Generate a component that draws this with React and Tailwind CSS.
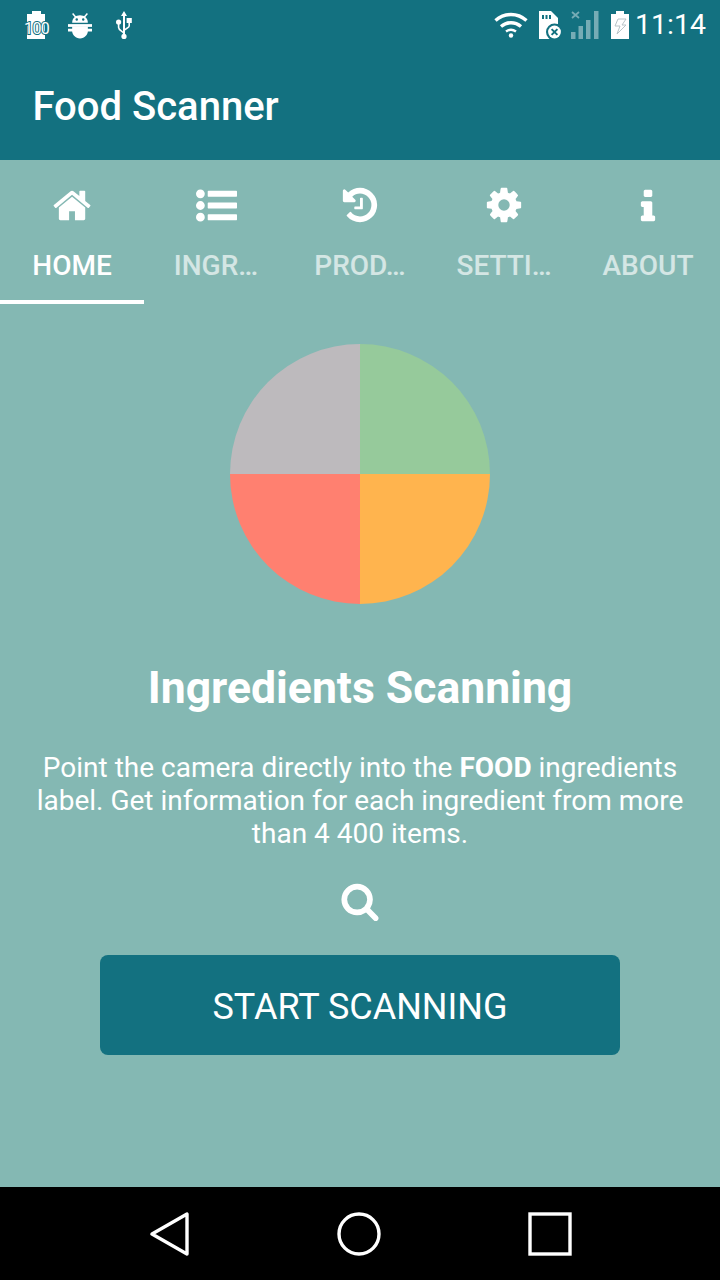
import React from "react";

const font = { fontFamily: "Roboto, sans-serif" };

// Font Awesome 4 glyph outlines on a 1792 unit grid.
const GLYPHS = {
  home: "M1408 992v480q0 26-19 45t-45 19h-384v-384h-256v384h-384q-26 0-45-19t-19-45v-480q0-1 .5-3t.5-3l575-474 575 474q1 2 1 6zm223-69l-62 74q-8 9-21 11h-3q-13 0-21-7l-692-577-692 577q-12 8-24 7-13-2-21-11l-62-74q-8-10-7-23.5t11-21.5l719-599q32-26 76-26t76 26l244 204v-195q0-14 9-23t23-9h192q14 0 23 9t9 23v408l219 182q10 8 11 21.5t-7 23.5z",
  list: "M384 1408q0 80-56 136t-136 56-136-56-56-136 56-136 136-56 136 56 56 136zm0-512q0 80-56 136t-136 56-136-56-56-136 56-136 136-56 136 56 56 136zm1408 416v192q0 13-9.5 22.5t-22.5 9.5h-1216q-13 0-22.5-9.5t-9.5-22.5v-192q0-13 9.5-22.5t22.5-9.5h1216q13 0 22.5 9.5t9.5 22.5zm-1408-928q0 80-56 136t-136 56-136-56-56-136 56-136 136-56 136 56 56 136zm1408 416v192q0 13-9.5 22.5t-22.5 9.5h-1216q-13 0-22.5-9.5t-9.5-22.5v-192q0-13 9.5-22.5t22.5-9.5h1216q13 0 22.5 9.5t9.5 22.5zm0-512v192q0 13-9.5 22.5t-22.5 9.5h-1216q-13 0-22.5-9.5t-9.5-22.5v-192q0-13 9.5-22.5t22.5-9.5h1216q13 0 22.5 9.5t9.5 22.5z",
  history: "M1664 896q0 156-61 298t-164 245-245 164-298 61q-172 0-327-72.5t-264-204.5q-7-10-6.5-22.5t8.5-20.5l137-138q10-9 25-9 16 2 23 12 73 95 179 147t225 52q104 0 198.5-40.5t163.5-109.5 109.5-163.5 40.5-198.5-40.5-198.5-109.5-163.5-163.5-109.5-198.5-40.5q-98 0-188 35.5t-160 101.5l137 138q31 30 14 69-17 40-59 40h-448q-26 0-45-19t-19-45v-448q0-42 40-59 39-17 69 14l130 129q107-101 244.5-156.5t284.5-55.5q156 0 298 61t245 164 164 245 61 298zm-640-288v448q0 14-9 23t-23 9h-320q-14 0-23-9t-9-23v-64q0-14 9-23t23-9h224v-352q0-14 9-23t23-9h64q14 0 23 9t9 23z",
  cog: "M1152 896q0-106-75-181t-181-75-181 75-75 181 75 181 181 75 181-75 75-181zm512-109v222q0 12-8 23t-20 13l-185 28q-19 54-39 91 35 50 107 138 10 12 10 25t-9 23q-27 37-99 108t-94 71q-12 0-26-9l-138-108q-44 23-91 38-16 136-29 186-7 28-36 28h-222q-14 0-24.5-8.5t-11.5-21.5l-28-184q-49-16-90-37l-141 107q-10 9-25 9-14 0-25-11-126-114-165-168-7-10-7-23 0-12 8-23 15-21 51-66.5t54-70.5q-27-50-41-99l-183-27q-13-2-21-12.5t-8-23.5v-222q0-12 8-23t19-13l186-28q14-46 39-92-40-57-107-138-10-12-10-24 0-10 9-23 26-36 98.5-107.5t94.5-71.5q13 0 26 10l138 107q44-23 91-38 16-136 29-186 7-28 36-28h222q14 0 24.5 8.5t11.5 21.5l28 184q49 16 90 37l142-107q9-9 24-9 13 0 25 10 129 119 165 170 7 8 7 22 0 12-8 23-15 21-51 66.5t-54 70.5q26 50 41 98l183 28q13 2 21 12.5t8 23.5z",
  info: "M1216 1344v128q0 26-19 45t-45 19h-512q-26 0-45-19t-19-45v-128q0-26 19-45t45-19h64v-384h-64q-26 0-45-19t-19-45v-128q0-26 19-45t45-19h384q26 0 45 19t19 45v576h64q26 0 45 19t19 45zm-128-1152v192q0 26-19 45t-45 19h-256q-26 0-45-19t-19-45v-192q0-26 19-45t45-19h256q26 0 45 19t19 45z",
  search: "M1216 832q0-185-131.5-316.5t-316.5-131.5-316.5 131.5-131.5 316.5 131.5 316.5 316.5 131.5 316.5-131.5 131.5-316.5zm512 832q0 52-38 90t-90 38q-54 0-90-38l-343-342q-179 124-399 124-143 0-273.5-55.5t-225-150-150-225-55.5-273.5 55.5-273.5 150-225 225-150 273.5-55.5 273.5 55.5 225 150 150 225 55.5 273.5q0 220-124 399l343 343q37 37 37 90z",
};

function Glyph({ name, size, className }) {
  return (
    <svg width={size} height={size} viewBox="0 0 1792 1792" fill="#fff" className={className}>
      <path d={GLYPHS[name]} />
    </svg>
  );
}

function FilmIcon() {
  return (
    <div className="relative w-[24px] h-[30px]">
      <svg width="24" height="30" viewBox="0 0 24 30" className="block">
        <path d="M8 1h9v3h4v25H3V4h5z" fill="#fff" />
      </svg>
      <span className="absolute left-0 right-0 top-[11px] text-center text-[16px] leading-[15px] tracking-[-0.6px] text-[#fff] font-['Roboto',sans-serif] [-webkit-text-stroke:2px_#137180] [paint-order:stroke_fill]">100</span>
    </div>
  );
}

function AndroidIcon() {
  return (
    <svg width="24" height="27" viewBox="0 0 26 28" fill="#fff">
      <path d="M5 1l3.5 4M21 1l-3.5 4" stroke="#fff" strokeWidth="1.6" fill="none" />
      <path d="M4.5 11c0-5 4-8 8.5-8s8.500 3 8.500 8z" />
      <rect x="0" y="12.500" width="26" height="3" />
      <rect x="0" y="17.500" width="26" height="3" />
      <rect x="4.500" y="15" width="17" height="3" />
      <path d="M4.500 20h17c0 4-3.500 8-8.500 8s-8.500-4-8.500-8z" />
      <circle cx="9.500" cy="7.500" r="1.300" fill="#137180" />
      <circle cx="16.500" cy="7.500" r="1.300" fill="#137180" />
    </svg>
  );
}

function UsbIcon() {
  return (
    <svg width="16" height="28" viewBox="0 0 16 28" fill="#fff">
      <path d="M8 0l3 5H9v19H7V5H5z" />
      <circle cx="8" cy="25.4" r="2.6" />
      <circle cx="2.6" cy="11" r="2.6" />
      <rect x="10.6" y="7" width="5.2" height="5" />
      <path d="M2.6 13v3.5c0 3 5.4 4 5.4 6.5M13.2 12v3c0 2-5.2 3-5.2 5" fill="none" stroke="#fff" strokeWidth="1.6" />
    </svg>
  );
}

function WifiIcon() {
  return (
    <svg width="34" height="26" viewBox="0 0 34 26" fill="none" stroke="#fff" strokeWidth="3.4">
      <path d="M1.5 8.5c9-8 22-8 31 0" />
      <path d="M7 14.5c6-5 14-5 20 0" />
      <path d="M12 19.5c3-2.2 7-2.2 10 0" strokeWidth="2.4" />
      <circle cx="17" cy="23.5" r="2.2" fill="#fff" stroke="none" />
    </svg>
  );
}

function SdIcon() {
  return (
    <svg width="24" height="28" viewBox="0 0 24 28">
      <path d="M0 0h12l7 7v21H0z" fill="#fff" />
      <path d="M3 4h2v4H3zM6.5 4h2v4h-2zM10 4h2v4h-2z" fill="#137180" />
      <circle cx="15.5" cy="21" r="8.5" fill="#137180" />
      <circle cx="15.5" cy="21" r="6.4" fill="#fff" />
      <path d="M12.6 18.1l5.8 5.8M18.4 18.1l-5.8 5.8" stroke="#137180" strokeWidth="2" />
    </svg>
  );
}

function SignalIcon() {
  return (
    <svg width="30" height="30" viewBox="0 0 30 30" fill="#ffffff" fillOpacity="0.42">
      <rect x="1" y="22" width="4.5" height="7" />
      <rect x="8.5" y="16" width="4.5" height="13" />
      <rect x="16" y="10" width="4.5" height="19" />
      <rect x="24" y="1" width="4.5" height="28" />
      <path d="M2 2l7 6M9 2L2 8" stroke="#ffffff" strokeOpacity="0.42" strokeWidth="1.8" />
    </svg>
  );
}

function BatteryIcon() {
  return (
    <svg width="18" height="30" viewBox="0 0 18 30">
      <path d="M5 1h8v3h5v25H0V4h5z" fill="#fff" />
      <path d="M7 9h8l-4 6h4l-9 9 3-8H4z" fill="none" stroke="#b9c4c8" strokeWidth="1" />
    </svg>
  );
}

function Tab({ icon, label, active }) {
  return (
    <div className="relative flex-1 h-[144px] flex flex-col items-center">
      <div className="h-[90px] flex items-center justify-center">{icon}</div>
      <span className={`text-[28px] leading-[30px] mt-[1px] font-medium ${active ? "text-[#fff]" : "text-[#fff]/65"}`}>{label}</span>
      {active && <div className="absolute left-0 right-0 bottom-0 h-[4px] bg-[#fff]" />}
    </div>
  );
}

export default function App() {
  return (
    <div className="w-[720px] h-[1280px] flex flex-col bg-[#84b8b3] overflow-hidden" style={font}>
      <header className="h-[160px] bg-[#137180] text-[#fff] flex flex-col">
        <div className="h-[50px] flex items-center pl-[24px] pr-[14px]">
          <div className="flex items-center gap-[20px]">
            <FilmIcon />
            <AndroidIcon />
            <div className="ml-[4px]"><UsbIcon /></div>
          </div>
          <div className="ml-auto flex items-center">
            <WifiIcon />
            <div className="ml-[11px]"><SdIcon /></div>
            <div className="ml-[7px]"><SignalIcon /></div>
            <div className="ml-[11px]"><BatteryIcon /></div>
            <span className="ml-[6px] text-[28.5px] leading-[30px]">11:14</span>
          </div>
        </div>
        <h1 className="pl-[32.5px] mt-[32px] text-[40px] leading-[50px] font-medium">Food Scanner</h1>
      </header>

      <nav className="flex">
        <Tab active label="HOME" icon={<Glyph name="home" size={41} className="ml-[3px]" />} />
        <Tab label="INGR…" icon={<Glyph name="list" size={41} />} />
        <Tab label="PROD…" icon={<Glyph name="history" size={40} />} />
        <Tab label="SETTI…" icon={<Glyph name="cog" size={40} />} />
        <Tab label="ABOUT" icon={<Glyph name="info" size={40} className="mt-[3px]" />} />
      </nav>

      <main className="flex-1 flex flex-col items-center">
        <svg width="260" height="260" viewBox="0 0 260 260" className="mt-[40px]">
          <path d="M130 130V0A130 130 0 0 1 260 130Z" fill="#96ca9b" />
          <path d="M130 130H260A130 130 0 0 1 130 260Z" fill="#ffb44e" />
          <path d="M130 130V260A130 130 0 0 1 0 130Z" fill="#ff8070" />
          <path d="M130 130H0A130 130 0 0 1 130 0Z" fill="#bdbabd" />
        </svg>
        <h2 className="mt-[57px] text-[44.5px] leading-[54px] font-bold text-[#fff]">Ingredients Scanning</h2>
        <p className="mt-[36px] w-[660px] text-center text-[28px] leading-[33px] text-[#fff]">
          Point the camera directly into the <b>FOOD</b> ingredients label. Get information for each ingredient from more than 4 400 items.
        </p>
        <Glyph name="search" size={40} className="mt-[31px]" />
        <button className="mt-[34px] w-[520px] h-[100px] pt-[3px] rounded-[8px] bg-[#137180] text-[#fff] text-[36px]">START SCANNING</button>
      </main>

      <footer className="h-[93px] bg-[#000] flex items-center justify-center gap-[146px]">
        <svg width="42" height="44" viewBox="0 0 42 44" fill="none" stroke="#fff" strokeWidth="3.4" strokeLinejoin="round">
          <path d="M38 2V42L3 22Z" />
        </svg>
        <svg width="44" height="44" viewBox="0 0 44 44" fill="none" stroke="#fff" strokeWidth="3.4">
          <circle cx="22" cy="22" r="20" />
        </svg>
        <svg width="44" height="44" viewBox="0 0 44 44" fill="none" stroke="#fff" strokeWidth="3.4" className="ml-[1px]">
          <rect x="2" y="2" width="40" height="40" />
        </svg>
      </footer>
    </div>
  );
}
